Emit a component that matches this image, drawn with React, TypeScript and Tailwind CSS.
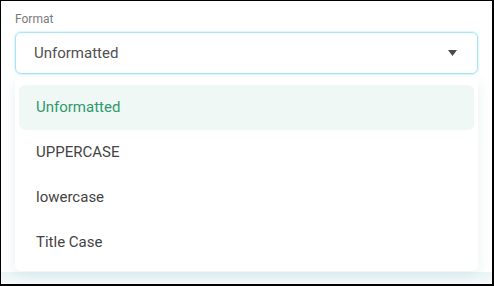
import React from 'react';

const options = ['Unformatted', 'UPPERCASE', 'lowercase', 'Title Case'];

const App: React.FC = () => {
  const selected = 'Unformatted';

  return (
    <div
      className="w-[494px] h-[286px] flex flex-col bg-white border-t border-l border-r-2 border-b-2 border-black overflow-hidden"
      style={{ fontFamily: 'Roboto, "Liberation Sans", sans-serif' }}
    >
      <div className="pl-[14px] pr-[14px] pt-[10px] relative z-10">
        <div className="text-[12px] leading-[16px] text-[#7a7a7a]">Format</div>

        <div className="mt-[5px] h-[42px] flex items-center justify-between rounded-[6px] border border-[#a6e6f5] pl-[18px] pr-[18px] shadow-[0_0_0_1px_rgba(190,238,250,0.5)]">
          <span className="text-[15px] text-[#505050]">{selected}</span>
          <svg width="9" height="6" viewBox="0 0 9 6" className="mr-[2px]">
            <path d="M0 0 H9 L4.5 6 Z" fill="#4a4a4a" />
          </svg>
        </div>

        <div className="mt-[3px] rounded-[6px] bg-white px-[4px] pt-[8px] pb-[6px] shadow-[0_4px_14px_rgba(60,150,170,0.13)]">
          {options.map((opt) => (
            <div
              key={opt}
              className={
                opt === selected
                  ? 'h-[45px] flex items-center rounded-[6px] bg-[#eff8f5] pl-[17px] text-[15px] text-[#2f9a6c]'
                  : 'h-[45px] flex items-center rounded-[6px] pl-[17px] text-[15px] text-[#444444]'
              }
            >
              {opt}
            </div>
          ))}
        </div>
      </div>
      <div className="flex-1 mt-[1px] bg-gradient-to-b from-[#ebf5f6] to-[#f6fafb]" />
    </div>
  );
};

export default App;
